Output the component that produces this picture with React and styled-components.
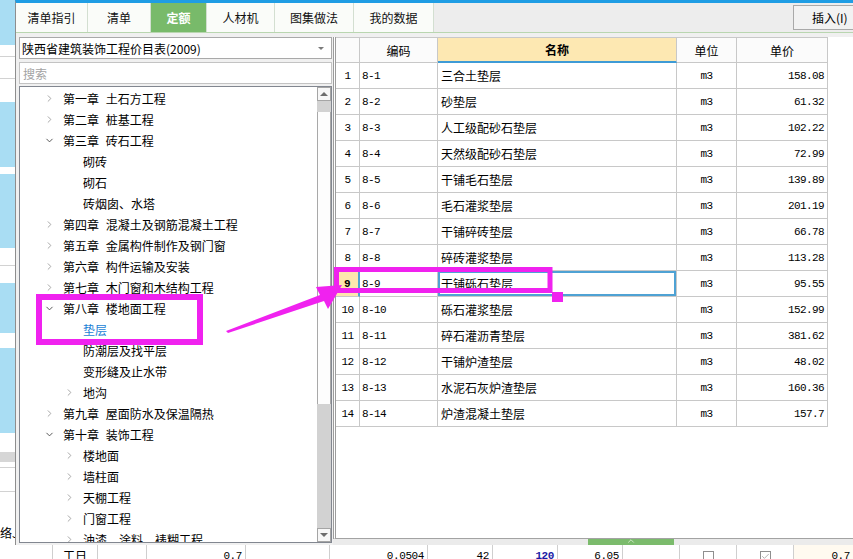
import React from 'react';
import styled, { createGlobalStyle } from 'styled-components';
import { ChevronRight, ChevronDown, ChevronUp, Check } from 'lucide-react';

const CJK = `"Noto Sans CJK SC", "Liberation Sans", sans-serif`;
const MONO = `"Liberation Mono", "Noto Sans CJK SC", monospace`;

const GlobalStyle = createGlobalStyle`
  html, body { margin: 0; padding: 0; background: #fff; }
  body { font-family: ${CJK}; font-size: 12px; color: #000; }
`;

const Screen = styled.div`
  position: relative;
  width: 853px;
  height: 559px;
  overflow: hidden;
  display: flex;
  flex-direction: column;
  background: #fff;
`;

const Main = styled.div`
  display: flex;
  height: 545px;
  flex-shrink: 0;
`;

/* background app peeking out on the left */
const LeftStrip = styled.div`
  width: 15px;
  flex-shrink: 0;
  display: flex;
  flex-direction: column;
  overflow: hidden;
`;

const Stripe = styled.div`
  height: ${p => p.$h}px;
  flex-shrink: 0;
  box-sizing: border-box;
  background: ${p => p.$bg || '#fff'};
  border-bottom: ${p => (p.$line ? '1px solid #d2d2d2' : 'none')};
  font-size: 12px;
  line-height: ${p => p.$h}px;
  white-space: nowrap;
`;

const Dialog = styled.div`
  flex: 1;
  display: flex;
  flex-direction: column;
  background: #f0f0f0;
  border-left: 1px solid #8e8e8e;
  border-top: 3px solid #1f9de4;
  min-width: 0;
`;

const TabBar = styled.div`
  display: flex;
  height: 29px;
  border-bottom: 1px solid #b9d6b0;
  overflow: hidden;
  flex-shrink: 0;
`;

const Tab = styled.div`
  width: ${p => p.$w}px;
  flex-shrink: 0;
  display: flex;
  align-items: center;
  justify-content: center;
  box-sizing: border-box;
  border-right: 1px solid #d3dfd1;
  background: ${p => (p.$active ? '#78ba6a' : '#fafcf9')};
  color: ${p => (p.$active ? '#fff' : '#111')};
  font-weight: ${p => (p.$active ? 700 : 400)};
  font-size: 12px;
`;

const TabRest = styled.div`
  flex: 1;
  display: flex;
  justify-content: flex-end;
  align-items: flex-start;
  background: #ededed;
`;

const InsertButton = styled.div`
  margin-top: 2px;
  margin-right: -12px;
  width: 72px;
  height: 25px;
  box-sizing: border-box;
  border: 1px solid #a9a9a9;
  background: #f2f2f2;
  padding-left: 18px;
  display: flex;
  align-items: center;
  font-size: 12px;
  white-space: nowrap;
`;

const Body = styled.div`
  flex: 1;
  display: flex;
  min-height: 0;
`;

const LeftPanel = styled.div`
  width: 317px;
  flex-shrink: 0;
  box-sizing: border-box;
  padding: 4px 1px 2px 3px;
  display: flex;
  flex-direction: column;
`;

const Select = styled.div`
  height: 22px;
  box-sizing: border-box;
  border: 1px solid #a9a9a9;
  background: #fff;
  display: flex;
  align-items: center;
  justify-content: space-between;
  padding: 0 7px 0 2px;
  font-size: 12px;
  flex-shrink: 0;
`;

const SelectArrow = styled.span`
  width: 0;
  height: 0;
  border-left: 3px solid transparent;
  border-right: 3px solid transparent;
  border-top: 3px solid #7a7a7a;
`;

const Search = styled.div`
  margin-top: 3px;
  height: 22px;
  box-sizing: border-box;
  border: 1px solid #c3c3c3;
  background: #fff;
  color: #a3a3a3;
  padding-left: 3px;
  display: flex;
  align-items: center;
  font-size: 12px;
  flex-shrink: 0;
`;

const TreeBox = styled.div`
  margin-top: 2px;
  flex: 1;
  min-height: 0;
  display: flex;
  border: 1px solid #828790;
  background: #fff;
`;

const TreeList = styled.div`
  flex: 1;
  padding-top: 1px;
  overflow: hidden;
`;

const TreeItem = styled.div`
  height: 21px;
  display: flex;
  align-items: center;
  padding-left: ${p => 24 + (p.$level - 1) * 20}px;
  white-space: nowrap;
`;

const Twisty = styled.span`
  width: 19px;
  flex-shrink: 0;
  display: flex;
  align-items: center;
  color: ${p => (p.$open ? '#4a4a4a' : '#a0a0a0')};
`;

const TreeLabel = styled.span`
  font-size: 12px;
  word-spacing: 4px;
  color: ${p => (p.$selected ? '#1b7fd6' : '#000')};
`;

const Scrollbar = styled.div`
  width: 14px;
  flex-shrink: 0;
  display: flex;
  flex-direction: column;
  background: #d2d2d2;
`;

const ScrollButton = styled.div`
  height: 14px;
  flex-shrink: 0;
  box-sizing: border-box;
  border: 1px solid #a5a5a5;
  background: #f7f7f7;
  display: flex;
  align-items: center;
  justify-content: center;
`;

const ScrollTriangle = styled.span`
  width: 0;
  height: 0;
  border-left: 4px solid transparent;
  border-right: 4px solid transparent;
  ${p => (p.$down ? 'border-top: 4px solid #6d6d6d;' : 'border-bottom: 4px solid #6d6d6d;')}
`;

const ScrollGap = styled.div`
  height: ${p => p.$h}px;
  flex-shrink: 0;
`;

const ScrollThumb = styled.div`
  height: 292px;
  flex-shrink: 0;
  box-sizing: border-box;
  background: #fdfdfd;
  border-left: 1px solid #a9a9a9;
  border-right: 1px solid #a9a9a9;
`;

const ScrollFill = styled.div`
  flex: 1;
`;

const RightPanel = styled.div`
  flex: 1;
  display: flex;
  flex-direction: column;
  padding-top: 4px;
  min-width: 0;
`;

const GridArea = styled.div`
  flex: 1;
  background: #fff;
  border-left: 3px double #9c9c9c;
  border-bottom: 1px solid #a3a3a3;
`;

const Table = styled.div`
  display: grid;
  grid-template-columns: 24px 78px 239px 60px 91px;
  border-top: 1px solid #c8c8c8;
  width: 492px;
`;

const HeadCell = styled.div`
  height: 25px;
  box-sizing: border-box;
  border-right: 1px solid #c8c8c8;
  border-bottom: ${p => (p.$accent ? '2px solid #3e9bd6' : '1px solid #c8c8c8')};
  background: ${p => (p.$accent ? '#fde8b2' : '#fbfbfb')};
  font-weight: ${p => (p.$accent ? 700 : 400)};
  display: flex;
  align-items: center;
  justify-content: center;
  font-size: 12px;
`;

const Cell = styled.div`
  height: 26px;
  box-sizing: border-box;
  border-right: 1px solid #c8c8c8;
  border-bottom: 1px solid #c8c8c8;
  display: flex;
  align-items: center;
  justify-content: ${p => p.$align || 'flex-start'};
  padding: 0 ${p => p.$pr || 0}px 0 ${p => p.$pl || 0}px;
  background: ${p => p.$bg || '#fff'};
  font-family: ${p => (p.$mono ? MONO : CJK)};
  font-size: ${p => (p.$mono ? '11px' : '12px')};
  letter-spacing: ${p => (p.$mono ? '-0.6px' : '0')};
  font-weight: ${p => (p.$bold ? 700 : 400)};
  box-shadow: ${p => (p.$focus ? 'inset 0 0 0 2px #4ea2d4' : 'none')};
  white-space: nowrap;
`;

const RowMark = styled(Cell)`
  border-right: ${p => (p.$current ? '2px solid #4ea2d4' : '1px solid #c8c8c8')};
`;

const Splitter = styled.div`
  height: 6px;
  flex-shrink: 0;
  background: #ebebeb;
  padding-left: 255px;
`;

const Handle = styled.div`
  width: 86px;
  height: 6px;
  background: #7bbb6c;
  display: flex;
  justify-content: center;
  align-items: flex-start;
  color: #dff1d7;
  overflow: hidden;
`;

/* background app grid row at the bottom */
const BottomRow = styled.div`
  height: 14px;
  display: flex;
  overflow: hidden;
  background: #fff;
`;

const BottomCell = styled.div`
  width: ${p => p.$w}px;
  flex-shrink: 0;
  box-sizing: border-box;
  border-right: ${p => (p.$last ? 'none' : '1px solid #cfcfcf')};
  background: ${p => p.$bg || '#fff'};
  color: ${p => p.$color || '#000'};
  font-weight: ${p => (p.$bold ? 700 : 400)};
  font-family: ${p => (p.$mono ? MONO : CJK)};
  font-size: ${p => (p.$mono ? '11px' : '12px')};
  letter-spacing: ${p => (p.$mono ? '-0.4px' : '0')};
  display: flex;
  justify-content: ${p => p.$align || 'flex-start'};
  padding: 4px ${p => p.$pr || 0}px 0 ${p => p.$pl || 0}px;
  line-height: 14px;
  white-space: nowrap;
`;

const Box = styled.div`
  width: 11px;
  height: 11px;
  margin-top: 2px;
  box-sizing: border-box;
  border: 1px solid #8f8f8f;
  background: #fff;
  color: #777;
  display: flex;
  justify-content: center;
`;

const Overlay = styled.svg`
  position: absolute;
  left: 0;
  top: 0;
  pointer-events: none;
`;

const stripes = [
  { h: 45, bg: '#a9ddf3' },
  { h: 12, line: true },
  { h: 22, line: true },
  { h: 23 },
  { h: 65, bg: '#a9ddf3' },
  { h: 7 },
  { h: 74, bg: '#a9ddf3' },
  { h: 18, line: true },
  { h: 17 },
  { h: 50, bg: '#a9ddf3' },
  { h: 15 },
  { h: 85, bg: '#a9ddf3' },
  { h: 19 },
  { h: 10, bg: '#d6d6d6' },
  { h: 6, line: true },
  { h: 24, line: true },
  { h: 32 },
  { h: 18, text: '络J' },
  { h: 3 },
];

const tabs = [
  { label: '清单指引', w: 72 },
  { label: '清单', w: 63 },
  { label: '定额', w: 56, active: true },
  { label: '人材机', w: 68 },
  { label: '图集做法', w: 79 },
  { label: '我的数据', w: 80 },
];

const tree = [
  { level: 1, label: '第一章 土石方工程', kind: 'closed' },
  { level: 1, label: '第二章 桩基工程', kind: 'closed' },
  { level: 1, label: '第三章 砖石工程', kind: 'open' },
  { level: 2, label: '砌砖' },
  { level: 2, label: '砌石' },
  { level: 2, label: '砖烟囱、水塔' },
  { level: 1, label: '第四章 混凝土及钢筋混凝土工程', kind: 'closed' },
  { level: 1, label: '第五章 金属构件制作及钢门窗', kind: 'closed' },
  { level: 1, label: '第六章 构件运输及安装', kind: 'closed' },
  { level: 1, label: '第七章 木门窗和木结构工程', kind: 'closed' },
  { level: 1, label: '第八章 楼地面工程', kind: 'open' },
  { level: 2, label: '垫层', selected: true },
  { level: 2, label: '防潮层及找平层' },
  { level: 2, label: '变形缝及止水带' },
  { level: 2, label: '地沟', kind: 'closed' },
  { level: 1, label: '第九章 屋面防水及保温隔热', kind: 'closed' },
  { level: 1, label: '第十章 装饰工程', kind: 'open' },
  { level: 2, label: '楼地面', kind: 'closed' },
  { level: 2, label: '墙柱面', kind: 'closed' },
  { level: 2, label: '天棚工程', kind: 'closed' },
  { level: 2, label: '门窗工程', kind: 'closed' },
  { level: 2, label: '油漆、涂料、裱糊工程', kind: 'closed' },
];

const rows = [
  ['8-1', '三合土垫层', '158.08'],
  ['8-2', '砂垫层', '61.32'],
  ['8-3', '人工级配砂石垫层', '102.22'],
  ['8-4', '天然级配砂石垫层', '72.99'],
  ['8-5', '干铺毛石垫层', '139.89'],
  ['8-6', '毛石灌浆垫层', '201.19'],
  ['8-7', '干铺碎砖垫层', '66.78'],
  ['8-8', '碎砖灌浆垫层', '113.28'],
  ['8-9', '干铺砾石垫层', '95.55'],
  ['8-10', '砾石灌浆垫层', '152.99'],
  ['8-11', '碎石灌沥青垫层', '381.62'],
  ['8-12', '干铺炉渣垫层', '48.02'],
  ['8-13', '水泥石灰炉渣垫层', '160.36'],
  ['8-14', '炉渣混凝土垫层', '157.7'],
];

const CURRENT = 8;

function TreeRow({ item }) {
  return (
    <TreeItem $level={item.level}>
      <Twisty $open={item.kind === 'open'}>
        {item.kind === 'closed' && <ChevronRight size={11} strokeWidth={2} />}
        {item.kind === 'open' && <ChevronDown size={11} strokeWidth={2} />}
      </Twisty>
      <TreeLabel $selected={item.selected}>{item.label}</TreeLabel>
    </TreeItem>
  );
}

function QuotaTable() {
  return (
    <Table>
      <HeadCell />
      <HeadCell>编码</HeadCell>
      <HeadCell $accent>名称</HeadCell>
      <HeadCell>单位</HeadCell>
      <HeadCell>单价</HeadCell>
      {rows.map(([code, name, price], i) => {
        const cur = i === CURRENT;
        return (
          <React.Fragment key={code}>
            <RowMark $mono $align="center" $bg={cur ? '#fde6ae' : '#fff'} $bold={cur} $current={cur}>
              {i + 1}
            </RowMark>
            <Cell $mono $pl={2}>{code}</Cell>
            <Cell $pl={3} $focus={cur}>{name}</Cell>
            <Cell $mono $align="center">m3</Cell>
            <Cell $mono $align="flex-end" $pr={3}>{price}</Cell>
          </React.Fragment>
        );
      })}
    </Table>
  );
}

function Annotations() {
  const pink = '#f022ef';
  return (
    <Overlay width="853" height="559" viewBox="0 0 853 559">
      <rect x="39" y="297" width="161" height="45" fill="none" stroke={pink} strokeWidth="6" />
      <rect x="336.5" y="269.5" width="213.5" height="21" fill="none" stroke={pink} strokeWidth="5" />
      <rect x="552" y="292" width="11" height="10" fill={pink} />
      <polygon
        points="226,331 320,295 316,287 342,285 328,309 324,301 228,333"
        fill={pink}
      />
    </Overlay>
  );
}

export default function App() {
  return (
    <>
      <GlobalStyle />
      <Screen>
        <Main>
          <LeftStrip>
            {stripes.map((s, i) => (
              <Stripe key={i} $h={s.h} $bg={s.bg} $line={s.line}>{s.text}</Stripe>
            ))}
          </LeftStrip>
          <Dialog>
            <TabBar>
              {tabs.map(t => (
                <Tab key={t.label} $w={t.w} $active={t.active}>{t.label}</Tab>
              ))}
              <TabRest>
                <InsertButton>插入(I)</InsertButton>
              </TabRest>
            </TabBar>
            <Body>
              <LeftPanel>
                <Select>
                  <span>陕西省建筑装饰工程价目表(2009)</span>
                  <SelectArrow />
                </Select>
                <Search>搜索</Search>
                <TreeBox>
                  <TreeList>
                    {tree.map((item, i) => <TreeRow key={i} item={item} />)}
                  </TreeList>
                  <Scrollbar>
                    <ScrollButton><ScrollTriangle /></ScrollButton>
                    <ScrollGap $h={11} />
                    <ScrollThumb />
                    <ScrollFill />
                    <ScrollButton><ScrollTriangle $down /></ScrollButton>
                  </Scrollbar>
                </TreeBox>
              </LeftPanel>
              <RightPanel>
                <GridArea>
                  <QuotaTable />
                </GridArea>
                <Splitter>
                  <Handle><ChevronUp size={10} strokeWidth={2} style={{ marginTop: -3 }} /></Handle>
                </Splitter>
              </RightPanel>
            </Body>
          </Dialog>
        </Main>
        <BottomRow>
          <BottomCell $w={53} />
          <BottomCell $w={45} $pl={10}>工日</BottomCell>
          <BottomCell $w={49} />
          <BottomCell $w={99} $mono $align="flex-end" $pr={3}>0.7</BottomCell>
          <BottomCell $w={84} />
          <BottomCell $w={98} $mono $align="flex-end" $pr={3}>0.0504</BottomCell>
          <BottomCell $w={65} $mono $align="flex-end" $pr={3}>42</BottomCell>
          <BottomCell $w={65} $mono $align="flex-end" $pr={3} $color="#1a1aa6" $bold>120</BottomCell>
          <BottomCell $w={65} $mono $align="flex-end" $pr={3}>6.05</BottomCell>
          <BottomCell $w={57} />
          <BottomCell $w={57} $align="center"><Box /></BottomCell>
          <BottomCell $w={57} $align="center"><Box><Check size={9} strokeWidth={1.5} /></Box></BottomCell>
          <BottomCell $w={59} $last $mono $align="flex-end" $pr={3} $bg="#fffaf0">0.7</BottomCell>
        </BottomRow>
        <Annotations />
      </Screen>
    </>
  );
}
